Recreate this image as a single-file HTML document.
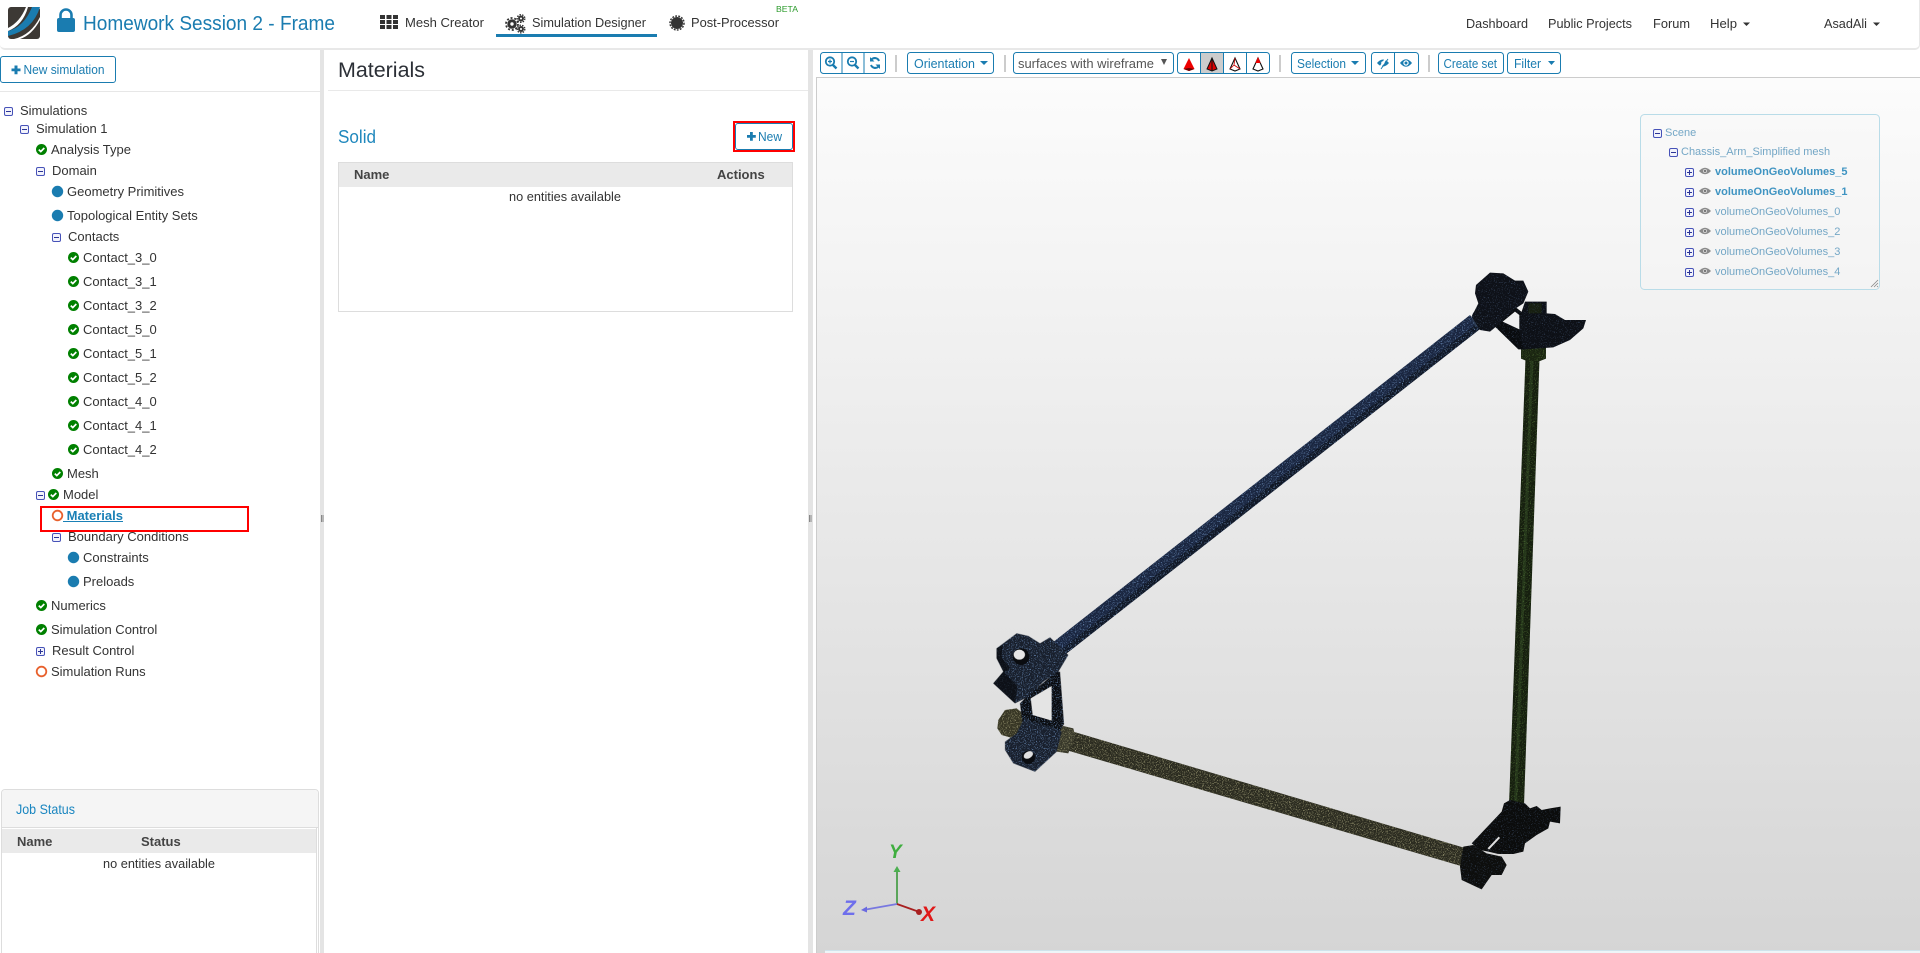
<!DOCTYPE html>
<html lang="en"><head><meta charset="utf-8"><title>Homework Session 2 - Frame</title>
<style>
html,body{margin:0;padding:0;width:1920px;height:953px;overflow:hidden;background:#fff;font-family:"Liberation Sans",sans-serif;font-size:13px;color:#333}
#root{position:relative;width:1920px;height:953px;overflow:hidden}
.a{position:absolute}
.t{position:absolute;height:18px;line-height:18px;white-space:nowrap;color:#333}
svg{position:absolute;left:0;top:0}
.btn{position:absolute;box-sizing:border-box;border:1px solid #1a7cb0;border-radius:3px;background:#fff}
.th{position:absolute;font-weight:bold;color:#444;line-height:16px;white-space:nowrap}
.sc{position:absolute;font-size:11px;line-height:14px;white-space:nowrap;color:#74a7c6}
.sc.b{font-weight:bold;color:#3f94c2}
</style></head><body><div id="root">

<!-- splitters / panels -->
<div class="a" style="left:0;top:0;width:1919px;height:48px;background:#fff;border-bottom:2px solid #e8e8e8;border-right:1px solid #e8e8e8;border-radius:0 0 5px 5px"></div>
<div class="a" style="left:320px;top:50px;width:4px;height:903px;background:#e4e4e4"></div>
<div class="a" style="left:808px;top:50px;width:5px;height:903px;background:#e4e4e4"></div>
<div class="a" style="left:0;top:91px;width:320px;height:1px;background:#e7e7e7"></div>
<div class="a" style="left:328px;top:90px;width:480px;height:1px;background:#e9e9e9"></div>

<div class="btn" style="left:0;top:56px;width:116px;height:27px"></div>

<!-- materials table -->
<div class="a" style="left:338px;top:162px;width:455px;height:150px;box-sizing:border-box;border:1px solid #ddd;background:#fff"></div>
<div class="a" style="left:339px;top:163px;width:453px;height:24px;background:#eaeaea"></div>
<div class="th" style="left:354px;top:167px">Name</div>
<div class="th" style="left:717px;top:167px">Actions</div>
<div class="btn" style="left:735px;top:123px;width:58px;height:27px"></div>
<div class="a" style="left:733px;top:121px;width:62px;height:31px;box-sizing:border-box;border:2px solid #f00"></div>

<!-- job status -->
<div class="a" style="left:1px;top:789px;width:318px;height:170px;box-sizing:border-box;border:1px solid #ddd;border-radius:4px;background:#fff"></div>
<div class="a" style="left:2px;top:790px;width:316px;height:38px;background:#f5f5f5;border-bottom:1px solid #ddd;box-sizing:border-box;border-radius:4px 4px 0 0"></div>
<div class="a" style="left:2px;top:829px;width:314px;height:24px;background:#eaeaea"></div>
<div class="a" style="left:316px;top:828px;width:1px;height:125px;background:#ddd"></div>
<div class="th" style="left:17px;top:834px">Name</div>
<div class="th" style="left:141px;top:834px">Status</div>

<!-- tree labels -->
<div class="t" style="left:20px;top:102px">Simulations</div>
<div class="t" style="left:36px;top:120px">Simulation 1</div>
<div class="t" style="left:51px;top:141px">Analysis Type</div>
<div class="t" style="left:52px;top:162px">Domain</div>
<div class="t" style="left:67px;top:183px">Geometry Primitives</div>
<div class="t" style="left:67px;top:207px">Topological Entity Sets</div>
<div class="t" style="left:68px;top:228px">Contacts</div>
<div class="t" style="left:83px;top:249px">Contact_3_0</div>
<div class="t" style="left:83px;top:273px">Contact_3_1</div>
<div class="t" style="left:83px;top:297px">Contact_3_2</div>
<div class="t" style="left:83px;top:321px">Contact_5_0</div>
<div class="t" style="left:83px;top:345px">Contact_5_1</div>
<div class="t" style="left:83px;top:369px">Contact_5_2</div>
<div class="t" style="left:83px;top:393px">Contact_4_0</div>
<div class="t" style="left:83px;top:417px">Contact_4_1</div>
<div class="t" style="left:83px;top:441px">Contact_4_2</div>
<div class="t" style="left:67px;top:465px">Mesh</div>
<div class="t" style="left:63px;top:486px">Model</div>
<div class="t" style="left:63px;top:507px;font-weight:bold;color:#1a80b6;text-decoration:underline;white-space:pre"> Materials</div>
<div class="t" style="left:68px;top:528px">Boundary Conditions</div>
<div class="t" style="left:83px;top:549px">Constraints</div>
<div class="t" style="left:83px;top:573px">Preloads</div>
<div class="t" style="left:51px;top:597px">Numerics</div>
<div class="t" style="left:51px;top:621px">Simulation Control</div>
<div class="t" style="left:52px;top:642px">Result Control</div>
<div class="t" style="left:51px;top:663px">Simulation Runs</div>
<div class="a" style="left:40px;top:506px;width:209px;height:26px;box-sizing:border-box;border:2px solid #f00"></div>

<!-- viewport -->
<div class="a" style="left:816px;top:77px;width:1104px;height:876px;box-sizing:border-box;border-top:1px solid #ccc;border-left:1px solid #ccc;background:linear-gradient(#fcfcfc,#d5d5d5)"></div>

<svg width="1920" height="953" viewBox="0 0 1920 953" xmlns="http://www.w3.org/2000/svg">
<defs>
<filter id="sb" filterUnits="userSpaceOnUse" x="0" y="0" width="1920" height="953" color-interpolation-filters="sRGB">
<feTurbulence type="fractalNoise" baseFrequency="0.85" numOctaves="2" seed="4" result="n"/>
<feColorMatrix in="n" type="matrix" values="0 0 0 0 .42 0 0 0 0 .55 0 0 0 0 .72 4 0 0 0 -2.15" result="c"/>
<feComposite in="c" in2="SourceAlpha" operator="in" result="m"/>
<feMerge><feMergeNode in="SourceGraphic"/><feMergeNode in="m"/></feMerge>
</filter>
<filter id="so" filterUnits="userSpaceOnUse" x="0" y="0" width="1920" height="953" color-interpolation-filters="sRGB">
<feTurbulence type="fractalNoise" baseFrequency="0.85" numOctaves="2" seed="9" result="n"/>
<feColorMatrix in="n" type="matrix" values="0 0 0 0 .62 0 0 0 0 .61 0 0 0 0 .46 4 0 0 0 -2.1" result="c"/>
<feComposite in="c" in2="SourceAlpha" operator="in" result="m"/>
<feMerge><feMergeNode in="SourceGraphic"/><feMergeNode in="m"/></feMerge>
</filter>
<filter id="sg" filterUnits="userSpaceOnUse" x="0" y="0" width="1920" height="953" color-interpolation-filters="sRGB">
<feTurbulence type="fractalNoise" baseFrequency="0.85" numOctaves="2" seed="2" result="n"/>
<feColorMatrix in="n" type="matrix" values="0 0 0 0 .30 0 0 0 0 .42 0 0 0 0 .20 4 0 0 0 -2.2" result="c"/>
<feComposite in="c" in2="SourceAlpha" operator="in" result="m"/>
<feMerge><feMergeNode in="SourceGraphic"/><feMergeNode in="m"/></feMerge>
</filter>
<filter id="sd" filterUnits="userSpaceOnUse" x="0" y="0" width="1920" height="953" color-interpolation-filters="sRGB">
<feTurbulence type="fractalNoise" baseFrequency="0.85" numOctaves="2" seed="6" result="n"/>
<feColorMatrix in="n" type="matrix" values="0 0 0 0 .26 0 0 0 0 .33 0 0 0 0 .44 4 0 0 0 -2.35" result="c"/>
<feComposite in="c" in2="SourceAlpha" operator="in" result="m"/>
<feMerge><feMergeNode in="SourceGraphic"/><feMergeNode in="m"/></feMerge>
</filter>
<symbol id="mn" viewBox="0 0 9 9"><rect x=".5" y=".5" width="8" height="8" rx="1.500" fill="#f2f3fb" stroke="#4652b8"/><path d="M2 4.500h5" stroke="#2c3596" stroke-width="1"/></symbol>
<symbol id="pl" viewBox="0 0 9 9"><rect x=".5" y=".5" width="8" height="8" rx="1.500" fill="#f2f3fb" stroke="#4652b8"/><path d="M2 4.500h5M4.500 2v5" stroke="#2c3596" stroke-width="1"/></symbol>
<symbol id="ck" viewBox="0 0 11 11"><circle cx="5.500" cy="5.500" r="5.500" fill="#008000"/><path d="M2.800 5.600l2 2L8.300 4" fill="none" stroke="#fff" stroke-width="1.700"/></symbol>
<symbol id="eye" viewBox="0 0 12 8"><path d="M0 4Q6-2.500 12 4 6 10.500 0 4z" fill="#8a8a8a"/><circle cx="6" cy="4" r="2" fill="#d8d8d8"/><circle cx="6" cy="4" r="1.200" fill="#777"/></symbol>
</defs>

<!-- logo + nav -->
<rect x="8" y="7" width="32" height="32" rx="3" fill="#3d3935"/>
<path d="M8 31Q24 27 32 7h8Q33 30 8 36z" fill="#1a7cb0"/>
<path d="M8 28Q20 22 26 7h2Q23 25 8 31zM14 39Q31 35 40 17v3Q32 35 20 39z" fill="#fff"/>
<rect x="57" y="18" width="18" height="14" rx="2" fill="#1a7cb0"/>
<path d="M60.500 18v-3a5.500 5.500 0 0 1 11 0v3" fill="none" stroke="#1a7cb0" stroke-width="2.600"/>
<text x="83" y="30" font-size="20" fill="#1a7cb0" textLength="252" lengthAdjust="spacingAndGlyphs">Homework Session 2 - Frame</text>
<g fill="#333"><rect x="380" y="15" width="5" height="4"/><rect x="386.500" y="15" width="5" height="4"/><rect x="393" y="15" width="5" height="4"/><rect x="380" y="20" width="5" height="4"/><rect x="386.500" y="20" width="5" height="4"/><rect x="393" y="20" width="5" height="4"/><rect x="380" y="25" width="5" height="4"/><rect x="386.500" y="25" width="5" height="4"/><rect x="393" y="25" width="5" height="4"/></g>
<text x="405" y="27" font-size="13" fill="#333" textLength="79" lengthAdjust="spacingAndGlyphs">Mesh Creator</text>
<g fill="none" stroke="#333">
<circle cx="512" cy="24" r="3.200" stroke-width="3"/><circle cx="512" cy="24" r="6" stroke-width="1.800" stroke-dasharray="2 1.800"/>
<circle cx="521" cy="18.500" r="2" stroke-width="1.900"/><circle cx="521" cy="18.500" r="3.800" stroke-width="1.400" stroke-dasharray="1.500 1.200"/>
<circle cx="521" cy="29" r="2" stroke-width="1.900"/><circle cx="521" cy="29" r="3.800" stroke-width="1.400" stroke-dasharray="1.500 1.200"/>
</g>
<text x="532" y="27" font-size="13" fill="#333" textLength="114" lengthAdjust="spacingAndGlyphs">Simulation Designer</text>
<rect x="496" y="34" width="161" height="3" fill="#1a7cb0"/>
<circle cx="677" cy="23" r="6" fill="#333"/><circle cx="677" cy="23" r="7" fill="none" stroke="#333" stroke-width="1.500" stroke-dasharray="1.800 1.300"/>
<text x="691" y="27" font-size="13" fill="#333" textLength="88" lengthAdjust="spacingAndGlyphs">Post-Processor</text>
<text x="776" y="12" font-size="8" fill="#2a9a2a" textLength="22" lengthAdjust="spacingAndGlyphs">BETA</text>
<g font-size="13" fill="#333">
<text x="1466" y="28" textLength="62" lengthAdjust="spacingAndGlyphs">Dashboard</text>
<text x="1548" y="28" textLength="84" lengthAdjust="spacingAndGlyphs">Public Projects</text>
<text x="1653" y="28" textLength="37" lengthAdjust="spacingAndGlyphs">Forum</text>
<text x="1710" y="28" textLength="27" lengthAdjust="spacingAndGlyphs">Help</text>
<path d="M1743 22.500h7l-3.500 3.500z"/>
<text x="1824" y="28" textLength="43" lengthAdjust="spacingAndGlyphs">AsadAli</text>
<path d="M1873 22.500h7l-3.500 3.500z"/>
</g>

<!-- left/mid text -->
<path d="M14.500 65.500h3v3h3v2.800h-3v3h-3v-3h-3v-2.800h3z" fill="#1a7cb0"/>
<text x="23.500" y="74" font-size="13" fill="#1a7cb0" textLength="81" lengthAdjust="spacingAndGlyphs">New simulation</text>
<text x="338" y="77" font-size="21" fill="#2b2f36" textLength="87" lengthAdjust="spacingAndGlyphs">Materials</text>
<text x="338" y="143" font-size="18" fill="#2088bd" textLength="38" lengthAdjust="spacingAndGlyphs">Solid</text>
<path d="M750 132h2.800v3h3v2.800h-3v3H750v-3h-3V135h3z" fill="#1a7cb0"/>
<text x="758" y="141" font-size="13" fill="#1a7cb0" textLength="24" lengthAdjust="spacingAndGlyphs">New</text>
<text x="509" y="201" font-size="13" fill="#333" textLength="112" lengthAdjust="spacingAndGlyphs">no entities available</text>
<text x="16" y="814" font-size="14" fill="#1a86c0" textLength="59" lengthAdjust="spacingAndGlyphs">Job Status</text>
<text x="103" y="868" font-size="13" fill="#333" textLength="112" lengthAdjust="spacingAndGlyphs">no entities available</text>

<!-- tree icons -->
<use href="#mn" x="4" y="107" width="9" height="9"/>
<use href="#mn" x="20" y="125" width="9" height="9"/>
<use href="#mn" x="36" y="167" width="9" height="9"/>
<use href="#mn" x="52" y="233" width="9" height="9"/>
<use href="#mn" x="36" y="491" width="9" height="9"/>
<use href="#mn" x="52" y="533" width="9" height="9"/>
<use href="#pl" x="36" y="647" width="9" height="9"/>
<use href="#ck" x="36" y="144" width="11" height="11"/>
<use href="#ck" x="68" y="252" width="11" height="11"/>
<use href="#ck" x="68" y="276" width="11" height="11"/>
<use href="#ck" x="68" y="300" width="11" height="11"/>
<use href="#ck" x="68" y="324" width="11" height="11"/>
<use href="#ck" x="68" y="348" width="11" height="11"/>
<use href="#ck" x="68" y="372" width="11" height="11"/>
<use href="#ck" x="68" y="396" width="11" height="11"/>
<use href="#ck" x="68" y="420" width="11" height="11"/>
<use href="#ck" x="68" y="444" width="11" height="11"/>
<use href="#ck" x="52" y="468" width="11" height="11"/>
<use href="#ck" x="48" y="489" width="11" height="11"/>
<use href="#ck" x="36" y="600" width="11" height="11"/>
<use href="#ck" x="36" y="624" width="11" height="11"/>
<g fill="#1a7cb0"><circle cx="57.500" cy="191.500" r="5.700"/><circle cx="57.500" cy="215.500" r="5.700"/><circle cx="73.500" cy="557.500" r="5.700"/><circle cx="73.500" cy="581.500" r="5.700"/></g>
<g fill="none" stroke="#e8602c" stroke-width="1.800"><circle cx="57.500" cy="515.500" r="4.800"/><circle cx="41.500" cy="671.500" r="4.800"/></g>
<g stroke="#888" stroke-width="1"><path d="M321.500 515v7M323 515v7M809.500 515v7M811 515v7"/></g>

<!-- toolbar -->
<g fill="#fff" stroke="#1a7cb0" stroke-width="1">
<rect x="820.500" y="52.500" width="65" height="21" rx="3"/>
<path d="M842 52.500v21M864 52.500v21"/>
<rect x="907.500" y="52.500" width="86" height="21" rx="3"/>
<rect x="1013.500" y="52.500" width="160" height="21" rx="3"/>
<rect x="1177.500" y="52.500" width="92" height="21" rx="3"/>
<rect x="1201" y="53" width="22.500" height="20" fill="#ccc" stroke="none"/>
<path d="M1200.500 52.500v21M1223.500 52.500v21M1246.500 52.500v21"/>
<rect x="1291.500" y="52.500" width="74" height="21" rx="3"/>
<rect x="1371.500" y="52.500" width="47" height="21" rx="3"/>
<path d="M1394.500 52.500v21"/>
<rect x="1438.500" y="52.500" width="65" height="21" rx="3"/>
<rect x="1507.500" y="52.500" width="53" height="21" rx="3"/>
</g>
<g stroke="#bbb" stroke-width="1.500"><path d="M896 55v17M1005 55v17M1280 55v17M1429 55v17"/></g>
<g fill="none" stroke="#1a7cb0" stroke-width="1.800">
<circle cx="830" cy="61.500" r="4.200"/><path d="M833 65l3.500 3.500" stroke-width="2.400"/><path d="M828 61.500h4M830 59.500v4" stroke-width="1.200"/>
<circle cx="852" cy="61.500" r="4.200"/><path d="M855 65l3.500 3.500" stroke-width="2.400"/><path d="M850 61.500h4" stroke-width="1.200"/>
<path d="M879 61a4.500 4.500 0 0 0-7.500-1.500M871 65a4.500 4.500 0 0 0 7.500 1.500" stroke-width="2"/>
</g>
<path d="M870 57v4.500h4.500zM880 69v-4.500h-4.500z" fill="#1a7cb0"/>
<g font-size="13" fill="#1a7cb0">
<text x="914" y="68" textLength="61" lengthAdjust="spacingAndGlyphs">Orientation</text>
<path d="M980 61h8l-4 4z"/>
<text x="1297" y="68" textLength="49" lengthAdjust="spacingAndGlyphs">Selection</text>
<path d="M1351 61h8l-4 4z"/>
<text x="1443.500" y="68" textLength="53.500" lengthAdjust="spacingAndGlyphs">Create set</text>
<text x="1514" y="68" textLength="27" lengthAdjust="spacingAndGlyphs">Filter</text>
<path d="M1548 61h7l-3.500 4z"/>
</g>
<text x="1018" y="68" font-size="13" fill="#555" textLength="136" lengthAdjust="spacingAndGlyphs">surfaces with wireframe</text>
<path d="M1161 59h6l-3 6z" fill="#555"/>
<!-- render mode cones -->
<path d="M1189 58l5.500 11-5.500 2-5.500-2z" fill="#e00"/><path d="M1183.500 69l5.500 2 5.500-2-5.500-1z" fill="#600"/>
<path d="M1212 58l5 11-5 2-5-2z" fill="#d00" stroke="#111" stroke-width="1"/><path d="M1212 58v13" stroke="#111"/>
<path d="M1235 58l5 11-5 2-5-2z" fill="#fff" stroke="#111" stroke-width="1.100"/><path d="M1235 58l-1 7 6 4M1234 65l-4 4" stroke="#c00" stroke-width=".8" fill="none"/>
<path d="M1258 58l5 11-5 2-5-2z" fill="#fff" stroke="#111" stroke-width="1.100"/><path d="M1258 57l2.600 6h-5.200z" fill="#e00"/>
<g>
<path d="M1377 63Q1383 56 1389 63 1383 70 1377 63z" fill="#1a7cb0"/><circle cx="1383" cy="63" r="1.800" fill="#fff"/><path d="M1379 69l8-12" stroke="#fff" stroke-width="2"/><path d="M1381 69l7-10" stroke="#1a7cb0" stroke-width="1"/>
<path d="M1400 63Q1406 55.500 1412 63 1406 70.500 1400 63z" fill="#1a7cb0"/><circle cx="1406" cy="63" r="2.700" fill="#fff"/><circle cx="1406" cy="63" r="1.500" fill="#1a7cb0"/>
</g>

<!-- scene tree box -->
<rect x="1640.500" y="114.500" width="239" height="175" rx="4" fill="#f6f6f6" fill-opacity=".35" stroke="#b9dce8"/>
<path d="M1871 287l7-7M1874 287l4-4M1877 287l1-1" stroke="#888" stroke-width=".8"/>
<use href="#mn" x="1653" y="129" width="9" height="9"/>
<use href="#mn" x="1669" y="148" width="9" height="9"/>
<use href="#pl" x="1685" y="168" width="9" height="9"/>
<use href="#pl" x="1685" y="188" width="9" height="9"/>
<use href="#pl" x="1685" y="208" width="9" height="9"/>
<use href="#pl" x="1685" y="228" width="9" height="9"/>
<use href="#pl" x="1685" y="248" width="9" height="9"/>
<use href="#pl" x="1685" y="268" width="9" height="9"/>
<use href="#eye" x="1699" y="167" width="12" height="8"/>
<use href="#eye" x="1699" y="187" width="12" height="8"/>
<use href="#eye" x="1699" y="207" width="12" height="8"/>
<use href="#eye" x="1699" y="227" width="12" height="8"/>
<use href="#eye" x="1699" y="247" width="12" height="8"/>
<use href="#eye" x="1699" y="267" width="12" height="8"/>

<!-- 3D frame: tubes -->
<g filter="url(#so)">
<path d="M1071 731L1465 848 1461 866 1066 750z" fill="#2b2b20"/>
<g transform="translate(960,600) scale(.3333)"><path d="M290 395L310 378 340 385 345 405 325 460 290 455z" fill="#38382a"/><path d="M115 360L135 330 170 325 195 345 185 400 160 415 125 405 112 385z" fill="#363524"/></g>
</g>
<g filter="url(#sg)">
<path d="M1526 345L1540 345 1524 805 1509 805z" fill="#161f0f"/>
<path d="M1531 345L1534 345 1517 805 1514 805z" fill="#24351a"/>
<g transform="translate(1440,260) scale(.3333)"><path d="M243 255H318V296L300 303H260L243 296z" fill="#1a2511"/></g>
</g>
<g filter="url(#sb)">
<path d="M1052 643L1470 315 1480 329 1062 657z" fill="#1a2640"/>
<path d="M1058 652L1476 324 1480 329 1062 657z" fill="#101725"/>
<g transform="translate(960,600) scale(.3333)">
<path d="M205 285L290 215 300 215 312 372 300 392 190 392 180 310z" fill="#0a0c10"/>
<path d="M110 145L170 100 205 108 240 130 270 112 325 165 310 190 295 215 250 245 205 290 165 310 100 250 130 215 110 175z" fill="#181f2c"/>
<path d="M135 425L170 400 195 350 215 365 290 385 305 395 290 455 225 515 160 490 135 450z" fill="#181f2c"/>
</g>
<g transform="translate(1440,260) scale(.3333)">
<circle cx="125" cy="175" r="30" fill="#27354c"/>
</g>
</g>
<g transform="translate(960,600) scale(.3333)">
<path d="M212 295L275 258 275 362 218 345z" fill="#e4e4e4"/>
<path d="M110 145L128 135 125 172 150 205 132 218 110 175zM100 250L130 215 172 258 165 310z" fill="#0a0c10" opacity=".75"/>
<circle cx="183" cy="170" r="25" fill="#0a0c10"/><ellipse cx="178" cy="164" rx="17" ry="15" fill="#e6e6e6"/>
<circle cx="205" cy="472" r="20" fill="#0a0c10"/><ellipse cx="205" cy="465" rx="15" ry="10" transform="rotate(-30 205 465)" fill="#e0e0e0"/>
</g>
<!-- dark end nodes -->
<g filter="url(#sd)">
<g transform="translate(1440,260) scale(.3333)">
<path d="M155 190L225 140 275 180 250 200 255 268 235 268z" fill="#090b0e"/>
<path d="M108 75L150 38 190 40 225 62 250 62 265 95 250 130 220 150 180 190 150 215 120 210 95 170 115 130 105 100z" fill="#0e1118"/>
<path d="M240 170L255 125H320V160L345 162 375 180H438L430 205 390 240 340 262 250 268 238 215z" fill="#0d1016"/>
<path d="M265 130H305V160H265z" fill="#171f10"/>
</g>
<g transform="translate(1430,780) scale(.3333)">
<path d="M222 70L240 60 285 70 300 85 320 78 335 90 360 85 392 80 390 130 360 125 355 145 320 165 285 190 280 215 250 222 205 222 175 215 150 210 125 190 215 95z" fill="#0b0c0c"/>
<path d="M90 260L100 200 130 195 170 220 215 230 230 255 215 285 185 285 155 328 95 300z" fill="#0d0e0d"/>
</g>
</g>
<g transform="translate(1440,260) scale(.3333)"><path d="M188 185L225 155 238 165 238 208z" fill="#efefef"/></g>
<g transform="translate(1430,780) scale(.3333)">
<path d="M175 207L208 172" stroke="#e0e0e0" stroke-width="6"/>
</g>

<!-- axes -->
<path d="M897 904V870" stroke="#5aa55a" stroke-width="2"/><path d="M897 866l-3.500 6h7z" fill="#4caf50"/>
<path d="M897 904L866 909.500" stroke="#7878e0" stroke-width="1.800"/><path d="M861 910l6-3.500v6z" fill="#6a6ae0"/>
<path d="M897 904L918 911.500" stroke="#a82020" stroke-width="1.800"/><circle cx="919" cy="912" r="3" fill="#a82020"/>
<text x="889" y="858" font-size="19" font-weight="bold" font-style="italic" fill="#3fae3f">Y</text>
<text x="843" y="915" font-size="21" font-weight="bold" font-style="italic" fill="#6f6fec">Z</text>
<text x="921" y="921" font-size="21" font-weight="bold" font-style="italic" fill="#e01818">X</text>
<rect x="825" y="950" width="1095" height="3" fill="#eef5f8"/><path d="M825 950.500H1920" stroke="#cfe3ec"/>
</svg>

<div class="sc" style="left:1665px;top:126px">Scene</div>
<div class="sc" style="left:1681px;top:145px">Chassis_Arm_Simplified mesh</div>
<div class="sc b" style="left:1715px;top:165px">volumeOnGeoVolumes_5</div>
<div class="sc b" style="left:1715px;top:185px">volumeOnGeoVolumes_1</div>
<div class="sc" style="left:1715px;top:205px">volumeOnGeoVolumes_0</div>
<div class="sc" style="left:1715px;top:225px">volumeOnGeoVolumes_2</div>
<div class="sc" style="left:1715px;top:245px">volumeOnGeoVolumes_3</div>
<div class="sc" style="left:1715px;top:265px">volumeOnGeoVolumes_4</div>
</div></body></html>
